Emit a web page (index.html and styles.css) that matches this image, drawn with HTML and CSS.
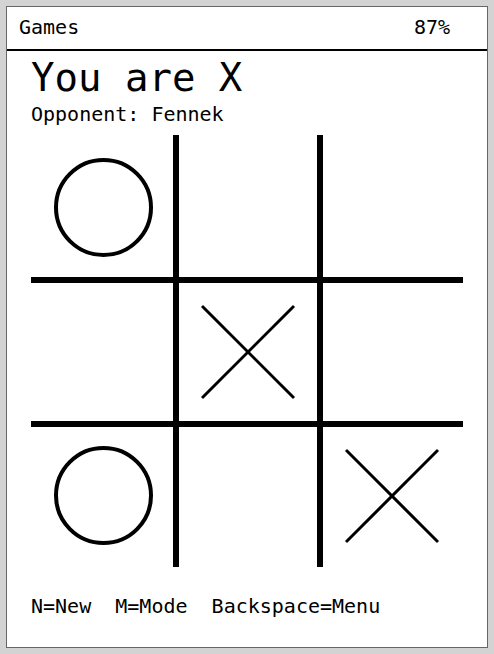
FILE: index.html
```html
<!DOCTYPE html>
<html>
<head>
<meta charset="utf-8">
<link rel="stylesheet" href="styles.css">
</head>
<body>
<div class="panel">
  <div class="header">
    <span>Games</span>
    <span>87%</span>
  </div>
  <div class="title">You are X</div>
  <div class="sub">Opponent: Fennek</div>
  <svg class="board" width="432" height="432" viewBox="0 0 432 432">
    <g stroke="#000" fill="none" shape-rendering="crispEdges">
      <line x1="144.5" y1="0" x2="144.5" y2="432" stroke-width="6"/>
      <line x1="288.5" y1="0" x2="288.5" y2="432" stroke-width="6"/>
      <line x1="0" y1="144.5" x2="432" y2="144.5" stroke-width="6"/>
      <line x1="0" y1="288.5" x2="432" y2="288.5" stroke-width="6"/>
    </g>
    <g stroke="#000" fill="none">
      <circle cx="72.5" cy="72.5" r="47.5" stroke-width="4"/>
      <circle cx="72.5" cy="360.5" r="47.5" stroke-width="4"/>
      <line x1="171" y1="171" x2="263" y2="263" stroke-width="3"/>
      <line x1="263" y1="171" x2="171" y2="263" stroke-width="3"/>
      <line x1="315" y1="315" x2="407" y2="407" stroke-width="3"/>
      <line x1="407" y1="315" x2="315" y2="407" stroke-width="3"/>
    </g>
  </svg>
  <div class="footer">N=New  M=Mode  Backspace=Menu</div>
</div>
</body>
</html>
```
FILE: styles.css
```css
html, body {
  margin: 0;
  padding: 0;
}
body {
  background: #d3d3d3;
  padding: 6px;
  font-family: "DejaVu Sans Mono", "Liberation Mono", monospace;
  color: #000;
}
.panel {
  box-sizing: border-box;
  width: 482px;
  height: 642px;
  background: #fff;
  border: 1px solid #666;
}
.header {
  box-sizing: border-box;
  height: 44px;
  padding: 10px 37px 0 12px;
  border-bottom: 2px solid #000;
  display: flex;
  justify-content: space-between;
  font-size: 20px;
  line-height: 20px;
}
.title {
  margin: 7px 0 0 24px;
  font-size: 39px;
  line-height: 39px;
}
.sub {
  margin: 7px 0 0 24px;
  font-size: 20px;
  line-height: 20px;
}
.board {
  display: block;
  margin: 11px 0 0 24px;
}
.footer {
  margin: 29px 0 0 24px;
  font-size: 20px;
  line-height: 20px;
  white-space: pre;
}
```
